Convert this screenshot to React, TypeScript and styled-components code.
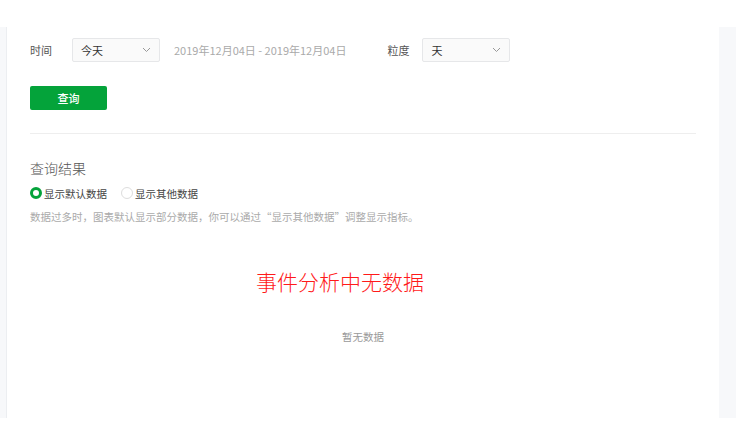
import styled, { createGlobalStyle } from "styled-components";

const GlobalStyle = createGlobalStyle`
  html, body {
    margin: 0;
    padding: 0;
    background: #fff;
  }
  body {
    font-family: "Noto Sans CJK SC", "Noto Sans", sans-serif;
    color: #333;
  }
`;

const Chevron = () => (
  <svg width="9" height="6" viewBox="0 0 9 6">
    <polyline points="1,1 4.5,4.5 8,1" fill="none" stroke="#999" strokeWidth="1" />
  </svg>
);

export default function App() {
  return (
    <>
      <GlobalStyle />
      <Header />
      <Frame>
        <LeftRail />
        <Main>
          <FilterRow>
            <Label>时间</Label>
            <Select>
              <span>今天</span>
              <Chevron />
            </Select>
            <DateRange>2019年12月04日 - 2019年12月04日</DateRange>
            <Label $gap={41}>粒度</Label>
            <Select>
              <span>天</span>
              <Chevron />
            </Select>
          </FilterRow>
          <QueryButton>查询</QueryButton>
          <Divider />
          <Title>查询结果</Title>
          <RadioGroup>
            <RadioItem>
              <RadioDot $checked />
              显示默认数据
            </RadioItem>
            <RadioItem>
              <RadioDot />
              显示其他数据
            </RadioItem>
          </RadioGroup>
          <Note>数据过多时，图表默认显示部分数据，你可以通过“显示其他数据”调整显示指标。</Note>
          <Alert>事件分析中无数据</Alert>
          <Empty>暂无数据</Empty>
        </Main>
        <RightRail />
      </Frame>
    </>
  );
}

const Header = styled.div`
  height: 27px;
  background: #fff;
`;

const Frame = styled.div`
  display: flex;
  width: 736px;
  height: 391px;
`;

const LeftRail = styled.div`
  width: 6px;
  background: #f7f8fa;
  border-right: 1px solid #eceef1;
`;

const RightRail = styled.div`
  width: 17px;
  background: #f7f8fa;
`;

const Main = styled.div`
  flex: 1;
  background: #fff;
  padding: 0 23px;
  display: flex;
  flex-direction: column;
  align-items: flex-start;
`;

const FilterRow = styled.div`
  margin-top: 11px;
  height: 24px;
  display: flex;
  align-items: center;
  align-self: stretch;
`;

const Label = styled.span<{ $gap?: number }>`
  font-size: 11px;
  color: #555;
  margin-left: ${(p) => p.$gap ?? 0}px;
  width: 42px;
  &:not(:first-child) {
    width: 35px;
  }
`;

const Select = styled.div`
  box-sizing: border-box;
  width: 88px;
  height: 24px;
  border: 1px solid #e6e7e9;
  border-radius: 2px;
  background: #fafafa;
  padding: 0 8px 0 8px;
  display: flex;
  align-items: center;
  justify-content: space-between;
  font-size: 11px;
  color: #333;
`;

const DateRange = styled.span`
  margin-left: 14px;
  font-size: 11px;
  color: #aaa;
`;

const QueryButton = styled.button`
  margin-top: 24px;
  width: 77px;
  height: 24px;
  border: none;
  border-radius: 2px;
  background: #04a33a;
  color: #fff;
  font-family: inherit;
  font-size: 11px;
  font-weight: 500;
  padding: 0;
`;

const Divider = styled.div`
  margin-top: 23px;
  height: 1px;
  align-self: stretch;
  background: #eeeeee;
`;

const Title = styled.div`
  margin-top: 24px;
  font-size: 14px;
  line-height: 20px;
  color: #555;
  font-weight: 300;
`;

const RadioGroup = styled.div`
  margin-top: 8px;
  display: flex;
  gap: 14px;
  height: 14px;
  align-items: center;
`;

const RadioItem = styled.label`
  display: flex;
  align-items: center;
  gap: 2px;
  font-size: 10.5px;
  color: #444;
`;

const RadioDot = styled.span<{ $checked?: boolean }>`
  box-sizing: border-box;
  width: 12px;
  height: 12px;
  border-radius: 50%;
  background: #fff;
  border: ${(p) => (p.$checked ? "3px solid #04a33a" : "1px solid #ddd")};
`;

const Note = styled.div`
  margin-top: 10px;
  font-size: 10.5px;
  line-height: 14px;
  color: #aaa;
`;

const Alert = styled.div`
  margin-top: 43px;
  margin-left: 226px;
  font-size: 21px;
  line-height: 28px;
  color: #ff1a1a;
  font-weight: 300;
`;

const Empty = styled.div`
  margin-top: 35px;
  align-self: stretch;
  text-align: center;
  font-size: 10.5px;
  line-height: 14px;
  color: #999;
`;
